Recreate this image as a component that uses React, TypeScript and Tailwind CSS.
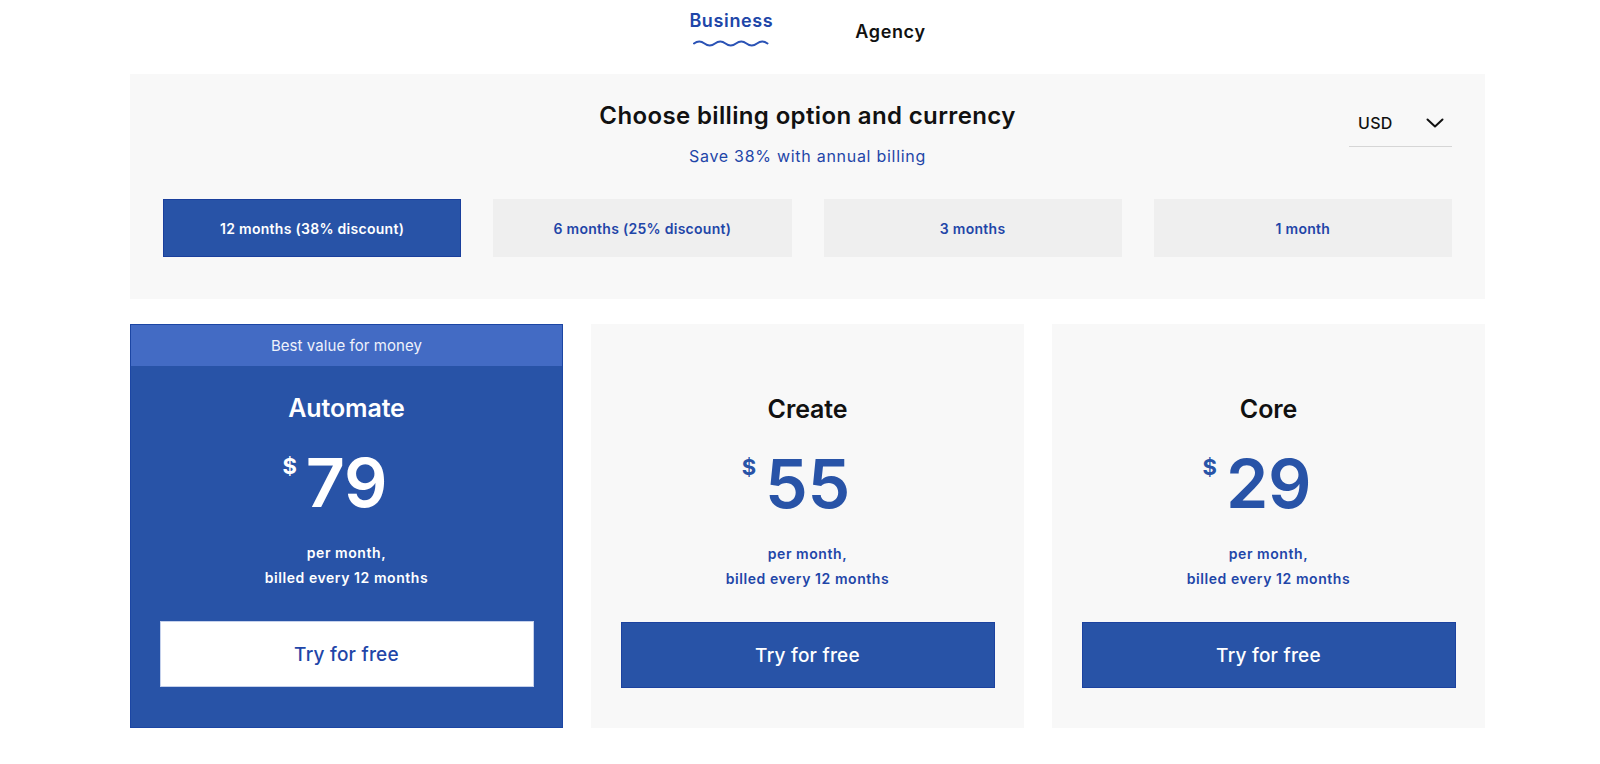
import React from "react";

function Wave() {
  return (
    <svg width="78" height="9" viewBox="0 0 78 9" className="mt-[6px]" fill="none">
      <path
        d="M2 4.5 q5.25 -4 10.5 0 t10.5 0 t10.5 0 t10.5 0 t10.5 0 t10.5 0 t10.5 0"
        stroke="#2a52b5"
        strokeWidth="2"
        strokeLinecap="round"
      />
    </svg>
  );
}

function Chevron() {
  return (
    <svg width="18" height="10" viewBox="0 0 18 10" fill="none">
      <polyline points="1.5,1.5 9,8.5 16.5,1.5" stroke="#111" strokeWidth="2" strokeLinecap="round" strokeLinejoin="round" />
    </svg>
  );
}

type Plan = { name: string; price: string; featured?: boolean };

function PlanCard({ name, price, featured }: Plan) {
  return (
    <div
      className={
        featured
          ? "flex flex-col items-center bg-[#2853a7] border border-[#1c46a4] pb-[39px]"
          : "flex flex-col items-center bg-[#f8f8f8] pb-[40px] pt-[43px]"
      }
    >
      {featured && (
        <div className="w-full h-[41px] bg-[#436bc4] flex items-center justify-center text-[15px] leading-[20px] text-[#eef2fb] tracking-[0.005em]">
          Best value for money
        </div>
      )}
      <div
        className={
          "mt-[26px] text-[25px] leading-[32px] font-semibold tracking-[-0.005em] " +
          (featured ? "text-white" : "text-[#111111]")
        }
      >
        {name}
      </div>
      <div className="mt-[24px] relative">
        <span
          className={
            "absolute right-full mr-[9px] top-[7px] text-[22px] leading-[22px] font-bold " +
            (featured ? "text-white" : "text-[#2853a7]")
          }
        >
          $
        </span>
        <span
          className={
            "block text-[68px] leading-[68px] font-semibold tracking-[-0.005em] " +
            (featured ? "text-white" : "text-[#2853a7]")
          }
        >
          {price}
        </span>
      </div>
      <div
        className={
          "mt-[24px] text-[14px] leading-[25px] font-semibold text-center tracking-[0.04em] " +
          (featured ? "text-white" : "text-[#1f46a8]")
        }
      >
        <div>per month,</div>
        <div>billed every 12 months</div>
      </div>
      <button
        className={
          featured
            ? "mt-[31px] w-[374px] h-[66px] pt-[2px] bg-white border border-[#c5d1ec] text-[#1f46a8] text-[19px] font-medium tracking-[0.012em]"
            : "mt-[31px] w-[374px] h-[66px] pt-[2px] bg-[#2853a7] border border-[#1c429f] text-white text-[19px] font-medium tracking-[0.012em]"
        }
      >
        Try for free
      </button>
    </div>
  );
}

export default function App() {
  const options = ["12 months (38% discount)", "6 months (25% discount)", "3 months", "1 month"];
  return (
    <div className="min-h-screen bg-white font-['Inter',sans-serif]">
      <div className="ml-[130px] w-[1355px]">
        <div className="h-[74px] flex justify-center gap-[82px]">
          <div className="pt-[9px] flex flex-col items-center">
            <span className="text-[18px] leading-[24px] font-semibold text-[#2046a8] tracking-[0.035em]">Business</span>
            <Wave />
          </div>
          <div className="pt-[20px]">
            <span className="text-[18px] leading-[24px] font-semibold text-[#111111] tracking-[0.035em]">Agency</span>
          </div>
        </div>

        <div className="bg-[#f8f8f8] h-[225px] px-[33px] pt-[26px]">
          <div className="grid grid-cols-[1fr_auto_1fr]">
            <div />
            <div className="flex flex-col items-center">
              <h1 className="text-[24px] leading-[32px] font-semibold text-[#111111] tracking-[0.015em]">
                Choose billing option and currency
              </h1>
              <p className="mt-[12px] text-[16px] leading-[24px] text-[#1f46a8] tracking-[0.045em]">
                Save 38% with annual billing
              </p>
            </div>
            <div className="flex justify-end">
              <div className="mt-[11px] w-[103px] h-[36px] border-b border-[#d6d6d6] flex items-start justify-between pl-[9px] pr-[8px]">
                <span className="text-[16px] leading-[24px] font-medium text-[#111111] tracking-[0.02em]">USD</span>
                <span className="pt-[7px]">
                  <Chevron />
                </span>
              </div>
            </div>
          </div>
          <div className="mt-[31px] grid grid-cols-4 gap-[32px]">
            {options.map((o, i) => (
              <button
                key={o}
                className={
                  i === 0
                    ? "h-[58px] bg-[#2853a7] border border-[#1a3f9c] text-white text-[14px] font-semibold tracking-[0.02em]"
                    : "h-[58px] bg-[#efefef] text-[#1f46a8] text-[14px] font-semibold tracking-[0.02em]"
                }
              >
                {o}
              </button>
            ))}
          </div>
        </div>

        <div className="mt-[25px] grid grid-cols-3 gap-[28px]">
          <PlanCard name="Automate" price="79" featured />
          <PlanCard name="Create" price="55" />
          <PlanCard name="Core" price="29" />
        </div>
      </div>
    </div>
  );
}
